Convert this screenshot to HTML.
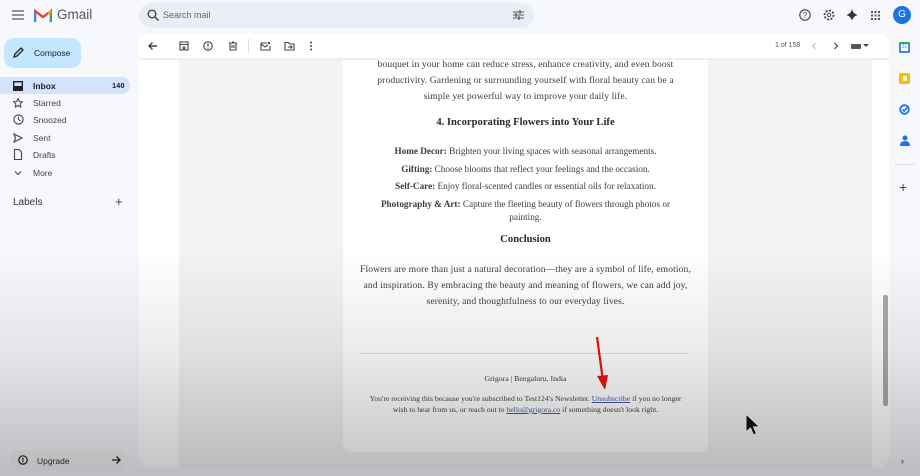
<!DOCTYPE html>
<html><head><meta charset="utf-8">
<style>
*{margin:0;padding:0;box-sizing:border-box}
body{width:920px;height:476px;overflow:hidden;background:#f6f8fc;font-family:"Liberation Sans",sans-serif;position:relative;color:#202124}
.abs{position:absolute}
.nav{position:absolute;left:0;width:130px;height:17px;font-size:8.5px;color:#444;display:flex;align-items:center}
.nav span.t{position:absolute;left:33px}
.nav svg{position:absolute;left:13px}
.serif{font-family:"Liberation Serif",serif}
.ec{position:absolute;left:343px;width:365px;text-align:center;color:#3c3c3c}
.ic{position:absolute;stroke:#444;fill:none;stroke-width:1.4}
</style></head><body>

<svg class="abs" style="left:12px;top:10px" width="12" height="10"><path d="M0 1h12M0 5h12M0 9h12" stroke="#555" stroke-width="1.3"/></svg>
<svg class="abs" style="left:34px;top:9px" width="18" height="13" viewBox="0 0 18 13"><path d="M1 13V2l8 6 8-6v11" fill="none" stroke="#ea4335" stroke-width="2.4"/><path d="M1 13V3" stroke="#4285f4" stroke-width="2.4"/><path d="M17 13V3" stroke="#34a853" stroke-width="2.4"/><path d="M14 4l3-2" stroke="#fbbc04" stroke-width="2.4"/></svg>
<div class="abs" style="left:57px;top:7px;font-size:13.5px;color:#555">Gmail</div>
<div class="abs" style="left:139px;top:3px;width:395px;height:25px;background:#e9eef6;border-radius:13px"></div>
<svg class="abs" style="left:147px;top:9px" width="12" height="12"><circle cx="5" cy="5" r="3.8" stroke="#444" stroke-width="1.4" fill="none"/><path d="M8 8l3.5 3.5" stroke="#444" stroke-width="1.5"/></svg>
<div class="abs" style="left:163px;top:10px;font-size:9px;color:#666">Search mail</div>
<svg class="abs" style="left:513px;top:10px" width="11" height="10"><path d="M0 2h11M0 5h11M0 8h11" stroke="#555" stroke-width="1"/><path d="M7 0v4M3 3v4M6 6v4" stroke="#555" stroke-width="1.2"/></svg>
<svg class="abs" style="left:799px;top:9px" width="12" height="12"><circle cx="6" cy="6" r="5.2" stroke="#444" fill="none" stroke-width="1.1"/><text x="6" y="9" font-size="8" text-anchor="middle" fill="#444" font-family="Liberation Sans">?</text></svg>
<svg class="abs" style="left:823px;top:9px" width="12" height="12"><circle cx="6" cy="6" r="4.5" stroke="#444" fill="none" stroke-width="1.8" stroke-dasharray="2 1.5"/><circle cx="6" cy="6" r="1.7" stroke="#444" fill="none"/></svg>
<svg class="abs" style="left:846px;top:9px" width="12" height="12"><path d="M6 0Q7 5 12 6Q7 7 6 12Q5 7 0 6Q5 5 6 0Z" fill="#333"/></svg>
<svg class="abs" style="left:871px;top:11px" width="9" height="9"><g fill="#555"><rect x="0" y="0" width="2" height="2"/><rect x="3.5" y="0" width="2" height="2"/><rect x="7" y="0" width="2" height="2"/><rect x="0" y="3.5" width="2" height="2"/><rect x="3.5" y="3.5" width="2" height="2"/><rect x="7" y="3.5" width="2" height="2"/><rect x="0" y="7" width="2" height="2"/><rect x="3.5" y="7" width="2" height="2"/><rect x="7" y="7" width="2" height="2"/></g></svg>
<div class="abs" style="left:893px;top:6px;width:18px;height:18px;border-radius:50%;background:#1a73e8;color:#fff;font-size:10px;text-align:center;line-height:18px">G</div>

<div class="abs" style="left:4px;top:38px;width:77px;height:30px;background:#c2e7ff;border-radius:10px"></div>
<svg class="abs" style="left:13px;top:47px" width="11" height="11"><path d="M1 10l1-3 6-6 2 2-6 6z" fill="none" stroke="#222" stroke-width="1.3"/></svg>
<div class="abs" style="left:34px;top:48px;font-size:8.5px;color:#222">Compose</div>
<div class="abs" style="left:0;top:77px;width:130px;height:17px;background:#d3e3fd;border-radius:0 9px 9px 0"></div>
<div class="nav" style="top:77px;font-weight:bold;color:#202124"><svg width="10" height="10"><rect x="0.7" y="0.7" width="8.6" height="8.6" fill="none" stroke="#222" stroke-width="1.4"/><rect x="0.7" y="5" width="8.6" height="4.3" fill="#222"/></svg><span class="t">Inbox</span><span style="position:absolute;left:112px;font-size:7.5px">140</span></div>
<div class="nav" style="top:94px"><svg width="10" height="10"><path d="M5 .5l1.3 3 3.2.3-2.4 2.1.7 3.2L5 7.5 2.2 9.1l.7-3.2L.5 3.8l3.2-.3z" fill="none" stroke="#444"/></svg><span class="t">Starred</span></div>
<div class="nav" style="top:111px"><svg width="11" height="11"><circle cx="5.5" cy="5.5" r="4.6" fill="none" stroke="#444" stroke-width="1.1"/><path d="M5.5 2.5v3l2 1.5" stroke="#444" fill="none"/></svg><span class="t">Snoozed</span></div>
<div class="nav" style="top:129px"><svg width="10" height="10"><path d="M1 1l8 4-8 4 1.5-4z" fill="none" stroke="#444" stroke-width="1.1"/></svg><span class="t">Sent</span></div>
<div class="nav" style="top:146px"><svg width="10" height="11"><path d="M1.5 .5h4.5l2.5 2.5v7.5h-7z" fill="none" stroke="#444" stroke-width="1.1"/></svg><span class="t">Drafts</span></div>
<div class="nav" style="top:164px"><svg width="10" height="10"><path d="M2 3.5l3 3 3-3" fill="none" stroke="#444"/></svg><span class="t">More</span></div>
<div class="abs" style="left:13px;top:197px;font-size:10px;color:#333">Labels</div>
<div class="abs" style="left:115px;top:194px;font-size:13px;color:#444">+</div>

<div class="abs" style="left:139px;top:33px;width:750px;height:435px;background:#fff;border-radius:12px"></div>
<div class="abs" style="left:179px;top:60px;width:693px;height:408px;background:#f1f3f4"></div>
<div class="abs" style="left:139px;top:58px;width:750px;height:2px;background:#eef0f2"></div>
<svg class="ic" style="left:148px;top:41px" width="10" height="10"><path d="M9 5H1M4.5 1.5L1 5l3.5 3.5"/></svg>
<svg class="ic" style="left:179px;top:41px;stroke-width:1.1" width="10" height="10"><rect x="1" y="1" width="8" height="8"/><path d="M1 3.5h8M5 5v3M3.5 6.5L5 8l1.5-1.5"/></svg>
<svg class="ic" style="left:203px;top:41px" width="10" height="10"><circle cx="5" cy="5" r="4.2" stroke-width="1.1"/><path d="M5 2.5v3M5 6.8v.8"/></svg>
<svg class="ic" style="left:228px;top:41px" width="10" height="10"><path d="M1 2h8M2 2v7h6V2M4 1h2M4 4v3M6 4v3" stroke-width="1.1"/></svg>
<div class="abs" style="left:248px;top:39px;width:1px;height:14px;background:#ddd"></div>
<svg class="ic" style="left:260px;top:41px" width="11" height="10"><path d="M1 2h6M1 2v7h9V5M1 3l4 3 3-2" stroke-width="1.1"/><circle cx="9" cy="2" r="1.2" fill="#444" stroke="none"/></svg>
<svg class="ic" style="left:284px;top:41px" width="11" height="10"><path d="M1 1.5h3.5l1 1.5H10v6H1z M4 6h4M6.5 4.5L8 6 6.5 7.5" stroke-width="1.1"/></svg>
<svg class="abs" style="left:309px;top:41px" width="4" height="10"><g fill="#444"><circle cx="2" cy="1.5" r="1"/><circle cx="2" cy="5" r="1"/><circle cx="2" cy="8.5" r="1"/></g></svg>
<div class="abs" style="left:775px;top:42px;font-size:7px;color:#555">1 of 158</div>
<svg class="abs" style="left:811px;top:42px" width="6" height="8"><path d="M4.5 1L1.5 4l3 3" stroke="#bbb" fill="none"/></svg>
<svg class="abs" style="left:833px;top:42px" width="6" height="8"><path d="M1.5 1l3 3-3 3" stroke="#444" fill="none" stroke-width="1.2"/></svg>
<div class="abs" style="left:851px;top:44px;width:10px;height:5px;background:#555;border-radius:1px"></div>
<svg class="abs" style="left:863px;top:44px" width="6" height="4"><path d="M0 0h6L3 3z" fill="#444"/></svg>

<div class="abs" style="left:343px;top:60px;width:365px;height:392px;background:#fff;border-radius:0 0 8px 8px"></div>
<div class="ec serif" style="top:57px;font-size:9.6px;line-height:16px;padding:0 20px;letter-spacing:0.1px">bouquet in your home can reduce stress, enhance creativity, and even boost productivity. Gardening or surrounding yourself with floral beauty can be a simple yet powerful way to improve your daily life.</div>
<div class="ec serif" style="top:117px;font-size:10.6px;font-weight:bold;color:#2a2a2a">4. Incorporating Flowers into Your Life</div>
<div class="ec serif" style="top:146px;font-size:9.2px"><b>Home Decor:</b> Brighten your living spaces with seasonal arrangements.</div>
<div class="ec serif" style="top:164px;font-size:9.2px"><b>Gifting:</b> Choose blooms that reflect your feelings and the occasion.</div>
<div class="ec serif" style="top:181px;font-size:9.2px"><b>Self-Care:</b> Enjoy floral-scented candles or essential oils for relaxation.</div>
<div class="ec serif" style="top:198px;font-size:9.2px;line-height:13px;padding:0 30px"><b>Photography &amp; Art:</b> Capture the fleeting beauty of flowers through photos or painting.</div>
<div class="ec serif" style="top:234px;font-size:10.6px;font-weight:bold;color:#2a2a2a">Conclusion</div>
<div class="ec serif" style="top:262px;font-size:9.6px;line-height:16px;padding:0 14px;letter-spacing:0.1px">Flowers are more than just a natural decoration—they are a symbol of life, emotion, and inspiration. By embracing the beauty and meaning of flowers, we can add joy, serenity, and thoughtfulness to our everyday lives.</div>
<div class="abs" style="left:359px;top:353px;width:330px;height:1px;background:#e2e2e2"></div>
<div class="ec serif" style="top:374px;font-size:7.8px">Grigora | Bengaluru, India</div>
<div class="ec serif" style="top:393px;font-size:7.7px;line-height:11px;padding:0 22px">You're receiving this because you're subscribed to Test124's Newsletter. <u style="color:#3a5aa8">Unsubscribe</u> if you no longer<br>wish to hear from us, or reach out to <u style="color:#3a5aa8">hello@grigora.co</u> if something doesn't look right.</div>
<svg class="abs" style="left:594px;top:336px" width="16" height="56"><path d="M3 1l6 44" stroke="#f01010" stroke-width="2.2"/><path d="M3 40l8 14 3-15z" fill="#f01010"/></svg>
<svg class="abs" style="left:745px;top:413px" width="16" height="24"><path d="M1 1v18l4.5-4 3 7 3-1.3-3-6.8h6z" fill="#111" stroke="#fff" stroke-width="1"/></svg>

<div class="abs" style="left:883px;top:295px;width:5px;height:111px;background:#aaa;border-radius:2px"></div>

<div class="abs" style="left:899px;top:42px;width:11px;height:11px;border:2px solid #4285f4;border-top-color:#34a853;border-radius:1px;background:#fff;font-size:5px;color:#4285f4;text-align:center;line-height:7px">31</div>
<div class="abs" style="left:899px;top:73px;width:11px;height:11px;background:#fbbc04;border-radius:2px"></div>
<div class="abs" style="left:903px;top:76px;width:4px;height:5px;background:#fff;border-radius:2px 2px 1px 1px"></div>
<svg class="abs" style="left:899px;top:104px" width="11" height="11"><circle cx="5.5" cy="5.5" r="4.3" fill="none" stroke="#1a73e8" stroke-width="1.8"/><path d="M3.5 5.5l1.6 1.6L9.5 2" fill="none" stroke="#1a73e8" stroke-width="1.6"/></svg>
<svg class="abs" style="left:900px;top:135px" width="10" height="11"><circle cx="5" cy="3" r="2.5" fill="#1a73e8"/><path d="M0 11q0-5 5-5t5 5z" fill="#1a73e8"/></svg>
<div class="abs" style="left:895px;top:164px;width:20px;height:1px;background:#ddd"></div>
<div class="abs" style="left:899px;top:180px;font-size:14px;color:#444;line-height:14px">+</div>
<div class="abs" style="left:901px;top:456px;font-size:9px;color:#333">›</div>

<div class="abs" style="left:10px;top:450px;width:118px;height:20px;background:rgba(240,240,242,.6);border-radius:10px"></div>
<svg class="abs" style="left:18px;top:455px" width="10" height="10"><circle cx="5" cy="5" r="4.2" fill="none" stroke="#222" stroke-width="1.2"/><path d="M5 3v4.5M4 3.7L5 3" stroke="#222"/></svg>
<div class="abs" style="left:37px;top:456px;font-size:8.5px;color:#333">Upgrade</div>
<svg class="abs" style="left:111px;top:455px" width="10" height="10"><path d="M1 5h8M5.5 1.5L9 5 5.5 8.5" stroke="#222" stroke-width="1.3" fill="none"/></svg>

<div class="abs" style="left:0;top:250px;width:920px;height:226px;background:linear-gradient(to bottom,rgba(0,0,0,0),rgba(0,0,0,.08) 45%,rgba(0,0,0,.24));pointer-events:none"></div>
</body></html>
